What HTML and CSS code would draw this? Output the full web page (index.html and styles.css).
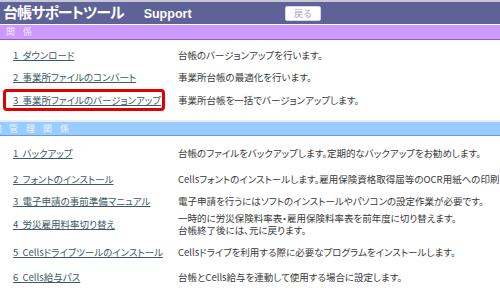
FILE: index.html
```html
<!DOCTYPE html>
<html lang="ja">
<head>
  <meta charset="UTF-8" />
  <title>台帳サポートツール</title>
  <link rel="stylesheet" href="styles.css">
</head>
<body>
  <div class="header">
    <div class="title">台帳サポートツール<span class="title-en">Support</span></div>
    <button class="back-btn">戻る</button>
  </div>

  <div class="bar bar-purple">関 係</div>
  <div class="list list-top">
    <div class="row"><a href="#">1&nbsp;&nbsp;ダウンロード</a><span class="desc">台帳のバージョンアップを行います。</span></div>
    <div class="row"><a href="#">2&nbsp;&nbsp;事業所ファイルのコンバート</a><span class="desc">事業所台帳の最適化を行います。</span></div>
    <div class="row marked"><a href="#">3&nbsp;&nbsp;事業所ファイルのバージョンアップ</a><span class="desc">事業所台帳を一括でバージョンアップします。</span><span class="mark"></span></div>
  </div>

  <div class="bar bar-blue"><span class="cut">務</span>管 理 関 係</div>
  <div class="list">
    <div class="row r1"><a href="#">1&nbsp;&nbsp;バックアップ</a><span class="desc">台帳のファイルをバックアップします。定期的なバックアップをお勧めします。</span></div>
    <div class="row r2"><a href="#">2&nbsp;&nbsp;フォントのインストール</a><span class="desc">Cellsフォントのインストールします。雇用保険資格取得届等のOCR用紙への印刷に使います</span></div>
    <div class="row r3"><a href="#">3&nbsp;&nbsp;電子申請の事前準備マニュアル</a><span class="desc">電子申請を行うにはソフトのインストールやパソコンの設定作業が必要です。</span></div>
    <div class="row r4"><a href="#">4&nbsp;&nbsp;労災雇用料率切り替え</a><span class="desc">一時的に労災保険料率表・雇用保険料率表を前年度に切り替えます。<br>台帳終了後には、元に戻ります。</span></div>
    <div class="row r5"><a href="#">5&nbsp;&nbsp;Cellsドライブツールのインストール</a><span class="desc">Cellsドライブを利用する際に必要なプログラムをインストールします。</span></div>
    <div class="row r6"><a href="#">6&nbsp;&nbsp;Cells給与パス</a><span class="desc">台帳とCells給与を連動して使用する場合に設定します。</span></div>
  </div>
</body>
</html>
```
FILE: styles.css
```css
body {
  margin: 0;
  width: 500px;
  height: 308px;
  overflow: hidden;
  background-color: #ffffff;
  font-family: "Noto Sans CJK JP", "Liberation Sans", sans-serif;
  font-feature-settings: "palt";
  color: #333333;
}
.header {
  display: flex;
  align-items: center;
  height: 22px;
  border-top: 2px solid #c8c8d4;
  background-color: #5f6296;
}
.title {
  width: 285px;
  padding-left: 3px;
  color: #ffffff;
  font-size: 15px;
  font-weight: bold;
  letter-spacing: -1px;
  line-height: 22px;
  white-space: nowrap;
  box-sizing: border-box;
}
.title-en {
  margin-left: 20px;
  font-family: "Liberation Sans", sans-serif;
  font-size: 12.5px;
  letter-spacing: 0;
}
.back-btn {
  width: 36px;
  height: 15px;
  margin-top: 1px;
  padding: 0;
  border: 1px solid #d8d4e8;
  border-radius: 2px;
  background-color: #ffffff;
  color: #a89cc8;
  font-family: "Noto Sans CJK JP", sans-serif;
  font-size: 9px;
  line-height: 13px;
}
.bar {
  height: 14px;
  font-size: 9px;
  line-height: 14px;
  letter-spacing: 3px;
  white-space: nowrap;
  overflow: hidden;
}
.bar-purple {
  margin-top: 1px;
  padding-left: 6px;
  background-color: #cc99ff;
  border-bottom: 1px solid #8a64b4;
  color: #f4e8ff;
}
.bar-blue {
  height: 13px;
  line-height: 13px;
  border-top: 2px solid #e4eef6;
  border-bottom: 1px solid #6f9cd0;
  background-color: #99ccff;
  color: #eef6ff;
}
.cut {
  display: inline-block;
  margin-left: -7px;
  margin-right: 4px;
}
.list {
  display: flex;
  flex-direction: column;
}
.list-top {
  padding-top: 4px;
  height: 76px;
}
.row {
  position: relative;
  display: grid;
  grid-template-columns: 178px 1fr;
  align-items: center;
  height: 22px;
  white-space: nowrap;
}
.row a {
  padding-left: 13px;
  color: #3d5a66;
  font-size: 9.5px;
}
.desc {
  color: #3a3a3a;
  font-size: 9.5px;
  line-height: 12px;
}
.marked {
  margin-top: 1px;
}
.mark {
  position: absolute;
  left: 3px;
  top: 0;
  width: 156px;
  height: 16px;
  border: 3px solid #e00000;
  border-radius: 4px;
}
.r1 { margin-top: 6px; height: 22px; }
.r2 { margin-top: 4px; }
.r3 { height: 22px; }
.r4 { height: 24px; }
.r5 { margin-top: 3px; height: 26px; }
.r6 { height: 24px; }
```
